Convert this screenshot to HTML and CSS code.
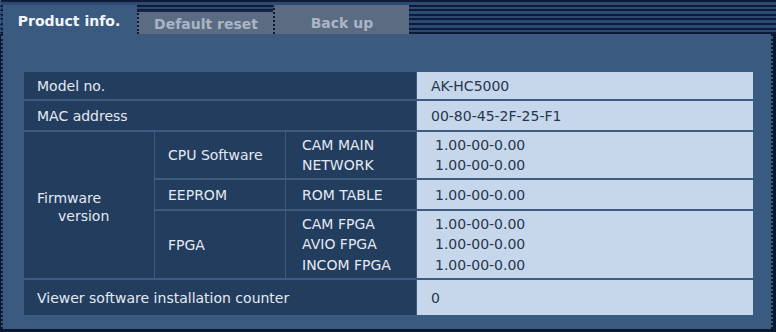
FILE: index.html
```html
<!DOCTYPE html>
<html>
<head>
<meta charset="utf-8">
<link rel="stylesheet" href="styles.css">
</head>
<body>
<div class="page">
  <div class="tabbar">
    <div class="tab active">Product info.</div>
    <div class="tab inactive first">Default reset</div>
    <div class="tab inactive second">Back up</div>
  </div>
  <div class="panel">
    <div class="grid">
      <div class="cell label span3 r1">Model no.</div>
      <div class="cell value r1">AK-HC5000</div>

      <div class="cell label span3 r2">MAC address</div>
      <div class="cell value r2">00-80-45-2F-25-F1</div>

      <div class="cell label fw">
        <div class="fwtext">Firmware<br><span class="indent">version</span></div>
      </div>
      <div class="cell label c2 r3">CPU Software</div>
      <div class="cell label c3 r3 multi"><div>CAM MAIN</div><div>NETWORK</div></div>
      <div class="cell value fwv r3 multi"><div>1.00-00-0.00</div><div>1.00-00-0.00</div></div>

      <div class="cell label c2 r4">EEPROM</div>
      <div class="cell label c3 r4">ROM TABLE</div>
      <div class="cell value fwv r4">1.00-00-0.00</div>

      <div class="cell label c2 r5">FPGA</div>
      <div class="cell label c3 r5 multi"><div>CAM FPGA</div><div>AVIO FPGA</div><div>INCOM FPGA</div></div>
      <div class="cell value fwv r5 multi"><div>1.00-00-0.00</div><div>1.00-00-0.00</div><div>1.00-00-0.00</div></div>

      <div class="cell label span3 r6">Viewer software installation counter</div>
      <div class="cell value r6">0</div>
    </div>
  </div>
</div>
</body>
</html>
```

FILE: styles.css
```css
html, body {
  margin: 0;
  padding: 0;
}
body {
  width: 776px;
  height: 332px;
  overflow: hidden;
  background: #0c1830;
  font-family: "DejaVu Sans", Verdana, sans-serif;
}
.page {
  width: 776px;
  height: 329px;
  display: flex;
  flex-direction: column;
}
.tabbar {
  height: 34px;
  flex: none;
  display: flex;
  align-items: flex-end;
  padding-left: 2px;
  border-left: 1px dotted #3b5a80;
  background: repeating-linear-gradient(to bottom, #0d1a38 0px, #0d1a38 2px, #2d4a73 2px, #2d4a73 4.6px);
}
.tab {
  width: 133px;
  display: flex;
  align-items: center;
  justify-content: center;
  font-weight: bold;
  font-size: 14px;
  box-sizing: border-box;
}
.tab.active {
  height: 29px;
  width: 134px;
  background: #3a5a80;
  color: #f2f5f9;
  padding-top: 3px;
  padding-right: 2px;
}
.tab.inactive {
  background: #5b6b82;
  color: #a9b5c6;
  border-left: 2px dotted #0d1a38;
  border-top: 2px solid #15264a;
}
.tab.first {
  height: 24px;
  width: 136px;
  padding-top: 1px;
}
.tab.second {
  height: 29px;
  width: 136px;
  padding-top: 4px;
  border-top-color: #5b6b82;
}
.panel {
  flex: 1;
  margin-left: 1px;
  margin-right: 3px;
  background: #3a5a80;
  padding: 38px 0 0 21px;
  border-left: 2px dotted #0d1a38;
  border-right: 2px dotted #0d1a38;
}
.grid {
  display: grid;
  width: 729px;
  grid-template-columns: 130px 130px 130px 336px;
  grid-template-rows: 27px 29px 46px 29px 67px 35px;
  column-gap: 1px;
  row-gap: 2px;
  background: #3d5b80;
  font-size: 14px;
}
.cell {
  display: flex;
  align-items: center;
  box-sizing: border-box;
}
.label {
  background: #233d5f;
  color: #e4eaf2;
  padding-left: 13px;
}
.value {
  background: #c6d7eb;
  color: #27364c;
  padding-left: 14px;
  grid-column: 4;
}
.value.fwv {
  padding-left: 18px;
}
.span3 { grid-column: 1 / 4; }
.r1 { grid-row: 1; }
.r2 { grid-row: 2; }
.r3 { grid-row: 3; }
.r4 { grid-row: 4; }
.r5 { grid-row: 5; }
.r6 { grid-row: 6; }
.c2 { grid-column: 2; }
.c3 { grid-column: 3; padding-left: 16px; }
.fw {
  grid-column: 1;
  grid-row: 3 / 6;
  padding-top: 4px;
}
.fwtext {
  line-height: 18px;
}
.indent {
  padding-left: 21px;
}
.multi {
  flex-direction: column;
  align-items: flex-start;
  justify-content: center;
  line-height: 20.5px;
}
```
